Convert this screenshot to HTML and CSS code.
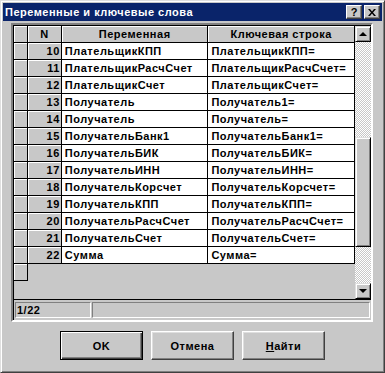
FILE: index.html
```html
<!DOCTYPE html>
<html lang="ru">

<head>
    <meta charset="UTF-8" />
    <title>Переменные и ключевые слова</title>
    <link rel="stylesheet" href="styles.css">
</head>

<body>
    <div class="window">
        <div class="titlebar">
            <span class="title">Переменные и ключевые слова</span>
            <div class="title-buttons">
                <button class="tbtn" type="button">?</button>
                <button class="tbtn" type="button">
                    <svg width="8" height="7" viewBox="0 0 8 7" aria-hidden="true">
                        <path d="M0 0h2l2 2.5L6 0h2L5 3.5 8 7H6L4 4.5 2 7H0l3-3.5Z" fill="#000" />
                    </svg>
                </button>
            </div>
        </div>

        <div class="dialog-body">
            <div class="grid-frame">
                <div class="grid-area">
                    <div class="grid">
                        <div class="row head">
                            <div class="cell ind"></div>
                            <div class="cell num">N</div>
                            <div class="cell hd">Переменная</div>
                            <div class="cell hd">Ключевая строка</div>
                        </div>
                        <div class="row"><div class="cell ind"></div><div class="cell num">10</div><div class="cell txt">ПлательщикКПП</div><div class="cell txt">ПлательщикКПП=</div></div>
                        <div class="row"><div class="cell ind"></div><div class="cell num">11</div><div class="cell txt">ПлательщикРасчСчет</div><div class="cell txt">ПлательщикРасчСчет=</div></div>
                        <div class="row"><div class="cell ind"></div><div class="cell num">12</div><div class="cell txt">ПлательщикСчет</div><div class="cell txt">ПлательщикСчет=</div></div>
                        <div class="row"><div class="cell ind"></div><div class="cell num">13</div><div class="cell txt">Получатель</div><div class="cell txt">Получатель1=</div></div>
                        <div class="row"><div class="cell ind"></div><div class="cell num">14</div><div class="cell txt">Получатель</div><div class="cell txt">Получатель=</div></div>
                        <div class="row"><div class="cell ind"></div><div class="cell num">15</div><div class="cell txt">ПолучательБанк1</div><div class="cell txt">ПолучательБанк1=</div></div>
                        <div class="row"><div class="cell ind"></div><div class="cell num">16</div><div class="cell txt">ПолучательБИК</div><div class="cell txt">ПолучательБИК=</div></div>
                        <div class="row"><div class="cell ind"></div><div class="cell num">17</div><div class="cell txt">ПолучательИНН</div><div class="cell txt">ПолучательИНН=</div></div>
                        <div class="row"><div class="cell ind"></div><div class="cell num">18</div><div class="cell txt">ПолучательКорсчет</div><div class="cell txt">ПолучательКорсчет=</div></div>
                        <div class="row"><div class="cell ind"></div><div class="cell num">19</div><div class="cell txt">ПолучательКПП</div><div class="cell txt">ПолучательКПП=</div></div>
                        <div class="row"><div class="cell ind"></div><div class="cell num">20</div><div class="cell txt">ПолучательРасчСчет</div><div class="cell txt">ПолучательРасчСчет=</div></div>
                        <div class="row"><div class="cell ind"></div><div class="cell num">21</div><div class="cell txt">ПолучательСчет</div><div class="cell txt">ПолучательСчет=</div></div>
                        <div class="row"><div class="cell ind"></div><div class="cell num">22</div><div class="cell txt">Сумма</div><div class="cell txt">Сумма=</div></div>
                        <div class="row"><div class="cell ind"></div></div>
                    </div>

                    <div class="vscroll">
                        <div class="sbtn"><span class="arrow up"></span></div>
                        <div class="track">
                            <div class="thumb"></div>
                        </div>
                        <div class="sbtn"><span class="arrow down"></span></div>
                    </div>
                </div>

                <div class="status">
                    <div class="field count">1/22</div>
                    <div class="field rest"></div>
                </div>
            </div>

            <div class="buttons">
                <button class="btn default" type="button">OK</button>
                <button class="btn" type="button">Отмена</button>
                <button class="btn" type="button"><u>Н</u>айти</button>
            </div>
        </div>
    </div>
</body>

</html>
```

FILE: styles.css
```css
:root {
    --face: #c8c8c8;
    --shadow: #808080;
    --dark: #404040;
    --light: #dfdfdf;
    --title: #0a246a;
}

* {
    margin: 0;
    padding: 0;
    box-sizing: border-box;
    font-family: 'Liberation Sans', Arial, sans-serif;
    letter-spacing: 0.5px;
}

body {
    background: var(--face);
}

.window {
    width: 385px;
    height: 373px;
    background: var(--face);
    border: 1px solid;
    border-color: var(--light) var(--dark) var(--dark) var(--light);
    box-shadow: inset 1px 1px #fff, inset -1px -1px var(--shadow);
    padding: 2px;
}

.titlebar {
    height: 18px;
    background: var(--title);
    display: flex;
    align-items: center;
    justify-content: space-between;
    padding: 0 2px 0 2px;
}

.title {
    color: #fff;
    font-weight: bold;
    font-size: 11px;
    white-space: nowrap;
}

.title-buttons {
    display: flex;
    gap: 2px;
}

.tbtn {
    width: 16px;
    height: 14px;
    background: var(--face);
    border: 1px solid;
    border-color: #fff var(--dark) var(--dark) #fff;
    box-shadow: inset -1px -1px var(--shadow);
    font-weight: bold;
    font-size: 11px;
    line-height: 11px;
    letter-spacing: 0;
    display: flex;
    align-items: center;
    justify-content: center;
    color: #000;
}

.dialog-body {
    padding: 2px 9px 0 8px;
}

.grid-frame {
    border: 2px solid;
    border-color: var(--shadow) #fff #fff var(--shadow);
    box-shadow: inset 1px 1px #000;
    height: 299px;
    display: flex;
    flex-direction: column;
}

.grid-area {
    height: 275px;
    display: flex;
    border-bottom: 1px solid #000;
}

.grid {
    width: 342px;
    padding: 1px 0 0 1px;
}

.row {
    display: flex;
    height: 17px;
}

.cell {
    height: 17px;
    border-right: 1px solid #000;
    border-bottom: 1px solid #000;
    font-size: 11px;
    font-weight: bold;
    line-height: 16px;
    white-space: nowrap;
    overflow: hidden;
}

.ind {
    width: 14px;
    background: var(--face);
    box-shadow: inset 1px 1px #fff;
}

.num {
    width: 34px;
    background: var(--face);
    box-shadow: inset 1px 1px #fff;
    text-align: right;
    padding-right: 1px;
}

.head .num {
    text-align: center;
    padding-right: 0;
}

.hd {
    width: 147px;
    background: var(--face);
    box-shadow: inset 1px 1px #fff;
    text-align: center;
}

.txt {
    width: 147px;
    background: #fff;
    padding-left: 3px;
}

.vscroll {
    width: 16px;
    display: flex;
    flex-direction: column;
    padding-top: 1px;
}

.sbtn {
    height: 16px;
    background: var(--face);
    border: 1px solid;
    border-color: var(--light) #000 #000 var(--light);
    box-shadow: inset 1px 1px #fff, inset -1px -1px var(--shadow);
    display: flex;
    align-items: center;
    justify-content: center;
}

.arrow {
    width: 0;
    height: 0;
    border-left: 4px solid transparent;
    border-right: 4px solid transparent;
}

.arrow.up {
    border-bottom: 4px solid #000;
    margin-top: -1px;
}

.arrow.down {
    border-top: 4px solid #000;
}

.track {
    flex: 1;
    background: repeating-conic-gradient(#fff 0 25%, var(--face) 0 50%) 0 0 / 2px 2px;
    padding-top: 95px;
}

.thumb {
    height: 110px;
    background: var(--face);
    border: 1px solid;
    border-color: var(--light) #000 #000 var(--light);
    box-shadow: inset 1px 1px #fff, inset -1px -1px var(--shadow);
}

.status {
    flex: 1;
    display: flex;
    gap: 1px;
    padding: 2px 1px 2px 2px;
}

.field {
    height: 16px;
    border: 1px solid;
    border-color: var(--shadow) #fff #fff var(--shadow);
    font-size: 11px;
    font-weight: bold;
    line-height: 14px;
    padding-left: 1px;
}

.count {
    width: 76px;
}

.rest {
    flex: 1;
}

.buttons {
    display: flex;
    gap: 8px;
    padding: 9px 0 0 49px;
}

.btn {
    width: 83px;
    height: 29px;
    background: var(--face);
    border: 1px solid;
    border-color: #fff var(--dark) var(--dark) #fff;
    box-shadow: inset -1px -1px var(--shadow), inset 1px 1px var(--light);
    font-size: 11px;
    font-weight: bold;
    color: #000;
}

.btn.default {
    border-color: #000;
    box-shadow: inset 1px 1px #fff, inset -1px -1px var(--dark), inset -2px -2px var(--shadow);
}
```
